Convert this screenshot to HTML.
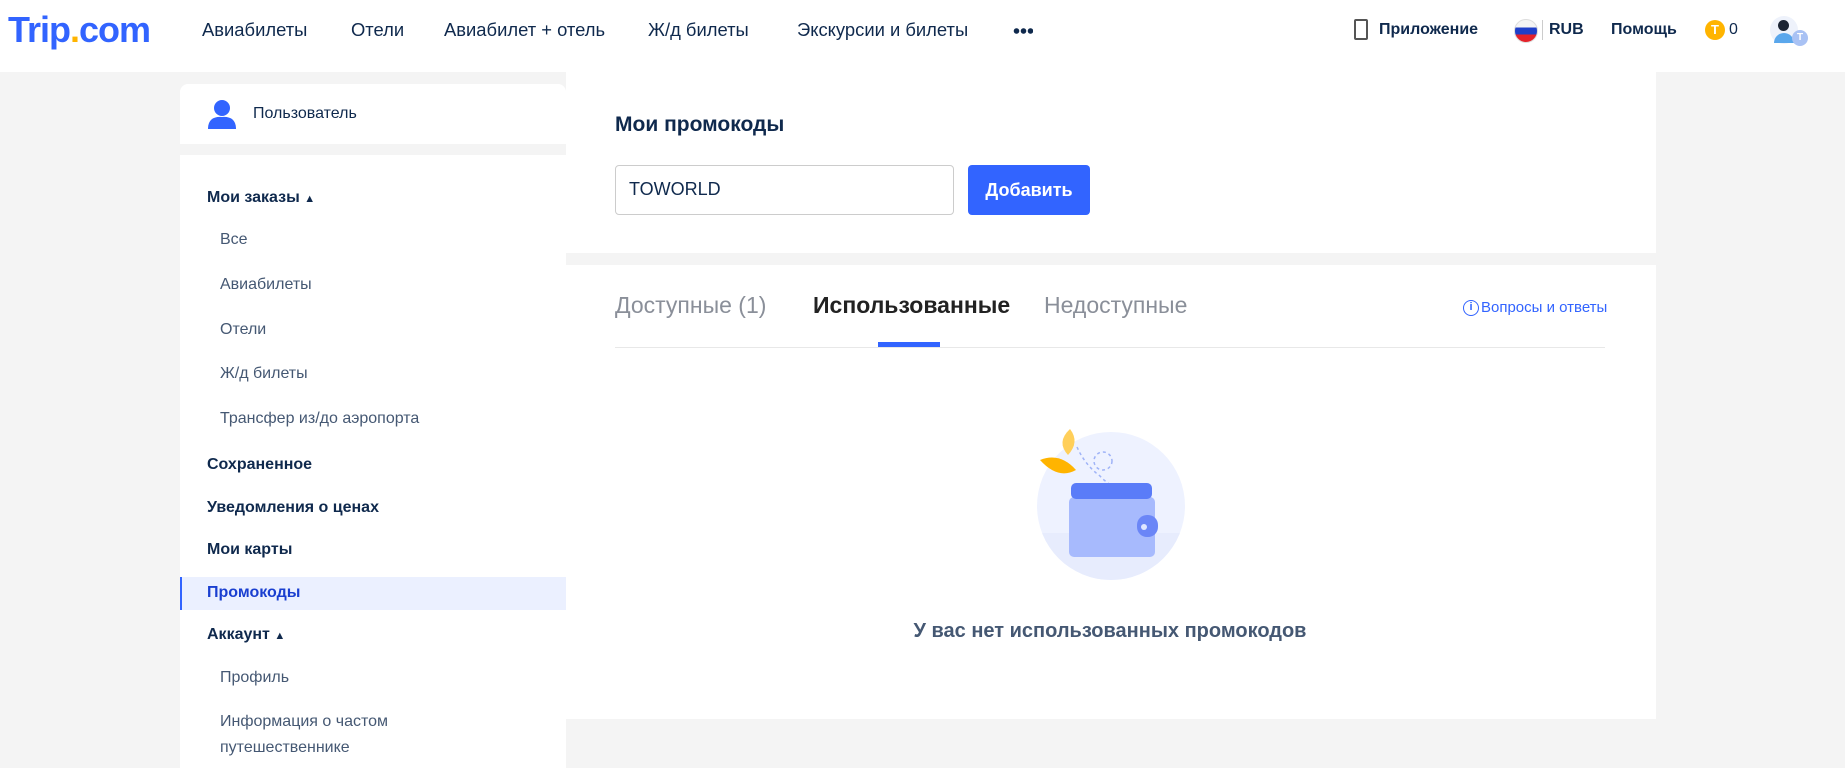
<!DOCTYPE html>
<html><head><meta charset="utf-8"><style>
*{margin:0;padding:0;box-sizing:border-box}
body{width:1845px;height:768px;overflow:hidden;background:#f4f4f4;font-family:"Liberation Sans",sans-serif;position:relative;color:#0f294d}
.a{position:absolute;white-space:nowrap}
#hdr{position:absolute;left:0;top:0;width:1845px;height:72px;background:#fff}
.nav{font-size:18.4px;color:#0f294d;top:19px}
.side{font-size:16px;color:#455873}
.sb{font-size:16px;font-weight:bold;color:#0f294d}
</style></head><body>
<div id="hdr">
<div class="a" style="left:8px;top:9px;font-size:36px;font-weight:bold;color:#3264ff;letter-spacing:-1px">Trip<span style="color:#ffb400">.</span>com</div>
<div class="a nav" style="left:202px">Авиабилеты</div>
<div class="a nav" style="left:351px">Отели</div>
<div class="a nav" style="left:444px">Авиабилет + отель</div>
<div class="a nav" style="left:648px">Ж/д билеты</div>
<div class="a nav" style="left:797px">Экскурсии и билеты</div>
<div class="a" style="left:1013px;top:28px;width:20px;height:6px;background:radial-gradient(circle,#0f294d 2.5px,transparent 3px) 0 0/7px 6px"></div>
<div class="a" style="left:1354px;top:19px;width:14px;height:21px;border:2px solid #555;border-radius:2px;background:#fff"></div>
<div class="a" style="left:1379px;top:21px;font-size:16px;font-weight:bold">Приложение</div>
<div class="a" style="left:1514px;top:19px;width:24px;height:24px;border-radius:50%;background:linear-gradient(#f4f4f4 33%,#1f3fc8 33%,#1f3fc8 66%,#e4222a 66%);border:1px solid #ddd"></div>
<div class="a" style="left:1542px;top:20px;width:1px;height:20px;background:#ccc"></div>
<div class="a" style="left:1549px;top:21px;font-size:16px;font-weight:bold">RUB</div>
<div class="a" style="left:1611px;top:21px;font-size:16px;font-weight:bold">Помощь</div>
<div class="a" style="left:1705px;top:20px;width:20px;height:20px;border-radius:50%;background:#ffb400;color:#fff;font-size:13px;font-weight:bold;text-align:center;line-height:20px">T</div>
<div class="a" style="left:1729px;top:21px;font-size:16px">0</div>
<div class="a" style="left:1770px;top:16px;width:28px;height:28px;border-radius:50%;background:#eef2fb"></div>
<div class="a" style="left:1778px;top:20px;width:11px;height:11px;border-radius:50%;background:#1b2433"></div>
<div class="a" style="left:1774px;top:33px;width:20px;height:10px;border-radius:10px 10px 0 0;background:#5aa7ec"></div>
<div class="a" style="left:1792px;top:30px;width:16px;height:16px;border-radius:50%;background:#a9c2f4;color:#fff;font-size:10px;text-align:center;line-height:16px;font-weight:bold">T</div>
</div>

<!-- sidebar -->
<div class="a" style="left:180px;top:84px;width:386px;height:60px;background:#fff;border-radius:8px 8px 0 0"></div>
<svg class="a" style="left:207px;top:99px" width="30" height="30" viewBox="0 0 30 30"><circle cx="15" cy="9" r="8" fill="#3264ff"/><path d="M1 30 Q1 17 15 18 Q29 17 29 30Z" fill="#3264ff"/></svg>
<div class="a" style="left:253px;top:105px;font-size:16px;color:#0f294d">Пользователь</div>
<div class="a" style="left:180px;top:155px;width:386px;height:613px;background:#fff"></div>
<div class="a sb" style="left:207px;top:189px">Мои заказы <span style="font-size:11px">▲</span></div>
<div class="a side" style="left:220px;top:231px">Все</div>
<div class="a side" style="left:220px;top:276px">Авиабилеты</div>
<div class="a side" style="left:220px;top:321px">Отели</div>
<div class="a side" style="left:220px;top:365px">Ж/д билеты</div>
<div class="a side" style="left:220px;top:410px">Трансфер из/до аэропорта</div>
<div class="a sb" style="left:207px;top:456px">Сохраненное</div>
<div class="a sb" style="left:207px;top:499px">Уведомления о ценах</div>
<div class="a sb" style="left:207px;top:541px">Мои карты</div>
<div class="a" style="left:180px;top:577px;width:386px;height:33px;background:#ebf0ff;border-left:2px solid #3264ff"></div>
<div class="a sb" style="left:207px;top:584px;color:#1a3fd0">Промокоды</div>
<div class="a sb" style="left:207px;top:626px">Аккаунт <span style="font-size:11px">▲</span></div>
<div class="a side" style="left:220px;top:669px">Профиль</div>
<div class="a side" style="left:220px;top:713px">Информация о частом</div>
<div class="a side" style="left:220px;top:739px">путешественнике</div>

<!-- main -->
<div class="a" style="left:566px;top:72px;width:1090px;height:181px;background:#fff"></div>
<div class="a" style="left:615px;top:113px;font-size:21px;font-weight:bold;color:#0f294d">Мои промокоды</div>
<div class="a" style="left:615px;top:165px;width:339px;height:50px;border:1px solid #ccc;border-radius:4px;background:#fff"></div>
<div class="a" style="left:629px;top:179px;font-size:18px;color:#0f294d">TOWORLD</div>
<div class="a" style="left:968px;top:165px;width:122px;height:50px;background:#3264ff;border-radius:4px;color:#fff;font-size:18px;font-weight:bold;text-align:center;line-height:50px">Добавить</div>

<div class="a" style="left:566px;top:265px;width:1090px;height:454px;background:#fff"></div>
<div class="a" style="left:615px;top:292px;font-size:23px;color:#8a8f99">Доступные (1)</div>
<div class="a" style="left:813px;top:292px;font-size:23px;font-weight:bold;color:#222">Использованные</div>
<div class="a" style="left:1044px;top:292px;font-size:23px;color:#8a8f99">Недоступные</div>
<div class="a" style="left:615px;top:347px;width:990px;height:1px;background:#e8e8e8"></div>
<div class="a" style="left:878px;top:342px;width:62px;height:5px;background:#3264ff"></div>
<div class="a" style="left:1463px;top:300px;width:16px;height:16px;border:1.5px solid #3264ff;border-radius:50%;color:#3264ff;font-size:11px;font-weight:bold;text-align:center;line-height:13px">i</div>
<div class="a" style="left:1481px;top:299px;font-size:15px;color:#3264ff">Вопросы и ответы</div>

<svg class="a" style="left:1000px;top:400px" width="200" height="200" viewBox="1000 400 200 200">
<defs><clipPath id="c"><circle cx="1111" cy="506" r="74"/></clipPath></defs>
<circle cx="1111" cy="506" r="74" fill="#eef2ff"/>
<rect x="1030" y="533" width="160" height="60" fill="#e7ecfd" clip-path="url(#c)"/>
<path d="M1068 455 Q1056 442 1070 429 Q1080 442 1068 455Z" fill="#ffcf5a"/>
<path d="M1040 460 Q1060 452 1076 470 Q1058 480 1040 460Z" fill="#ffb400"/>
<path d="M1077 447 Q1085 465 1100 476 Q1112 489 1128 491" stroke="#9fb3f7" stroke-width="1.5" fill="none" stroke-dasharray="3 3"/>
<circle cx="1103" cy="461" r="9" stroke="#9fb3f7" stroke-width="1.5" fill="none" stroke-dasharray="3 3"/>
<rect x="1069" y="497" width="86" height="60" rx="5" fill="#a7bafd"/>
<rect x="1071" y="483" width="81" height="16" rx="5" fill="#5a7cf8"/>
<rect x="1137" y="515" width="21" height="22" rx="10" fill="#6b86f7"/>
<circle cx="1144" cy="527" r="3" fill="#dfe6ff"/>
</svg>
<div class="a" style="left:910px;top:620px;width:400px;text-align:center;font-size:20px;font-weight:bold;color:#455873">У вас нет использованных промокодов</div>
</body></html>
